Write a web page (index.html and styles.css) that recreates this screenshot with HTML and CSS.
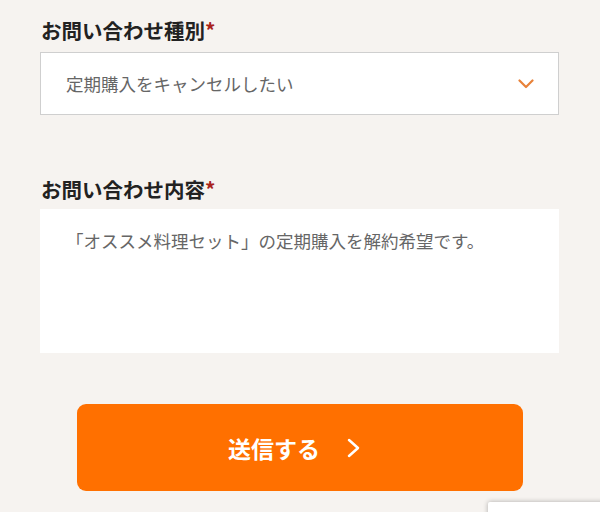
FILE: index.html
```html
<!DOCTYPE html>
<html lang="ja">
<head>
<meta charset="utf-8">
<link rel="stylesheet" href="styles.css">
</head>
<body>
<form class="form">
  <div class="field">
    <div class="label">お問い合わせ種別<span class="req">*</span></div>
    <div class="select">
      <span class="select-text">定期購入をキャンセルしたい</span>
      <svg class="chev-down" width="16" height="10" viewBox="0 0 16 10"><path d="M1.5 1.5 L8 8 L14.5 1.5" fill="none" stroke="#e8823a" stroke-width="2.2" stroke-linecap="round" stroke-linejoin="round"/></svg>
    </div>
  </div>
  <div class="field field2">
    <div class="label">お問い合わせ内容<span class="req">*</span></div>
    <div class="textarea">「オススメ料理セット」の定期購入を解約希望です。</div>
  </div>
  <div class="btn-row">
    <button type="button" class="submit">
      <span>送信する</span>
      <svg class="chev-right" width="16" height="20" viewBox="0 0 16 20"><path d="M3 2 L12 10 L3 18" fill="none" stroke="#fff" stroke-width="2.5" stroke-linecap="round" stroke-linejoin="round"/></svg>
    </button>
  </div>
</form>
<div class="badge"></div>
</body>
</html>
```
FILE: styles.css
```css
html, body {
  margin: 0;
  padding: 0;
  overflow: hidden;
}
body {
  background: #f6f3f0;
  font-family: "Noto Sans CJK JP", "Noto Sans", sans-serif;
  width: 600px;
  height: 512px;
}
.form {
  display: flex;
  flex-direction: column;
  padding: 15px 41px 0 40px;
}
.field {
  display: flex;
  flex-direction: column;
}
.field2 {
  margin-top: 59px;
}
.label {
  font-size: 20.5px;
  line-height: 30px;
  font-weight: 700;
  color: #222;
  padding-left: 1px;
}
.req {
  color: #a8231c;
}
.select {
  margin-top: 7px;
  height: 61px;
  background: #fff;
  border: 1px solid #cfcfcf;
  display: flex;
  align-items: center;
  justify-content: space-between;
  padding: 0 24px 0 25px;
}
.select-text {
  font-size: 17.5px;
  color: #666;
}
.chev-down {
  display: block;
  margin-top: 1px;
}
.textarea {
  margin-top: 5px;
  height: 144px;
  box-sizing: border-box;
  background: #fff;
  padding: 19px 20px 0 26px;
  font-size: 17.5px;
  line-height: 26px;
  color: #666;
}
.btn-row {
  display: flex;
  margin-top: 51px;
  padding-left: 37px;
}
.submit {
  width: 446px;
  height: 87px;
  border: none;
  border-radius: 9px;
  background: #ff7000;
  color: #fff;
  font-family: "Noto Sans CJK JP", "Noto Sans", sans-serif;
  font-size: 23px;
  font-weight: 700;
  display: flex;
  align-items: center;
  justify-content: center;
  gap: 26px;
  padding: 0 10px 0 0;
}
.chev-right {
  display: block;
}
.badge {
  position: fixed;
  left: 488px;
  top: 502px;
  width: 130px;
  height: 60px;
  background: #fff;
  box-shadow: 0 0 5px rgba(0,0,0,0.3);
  border-radius: 2px;
}
```
